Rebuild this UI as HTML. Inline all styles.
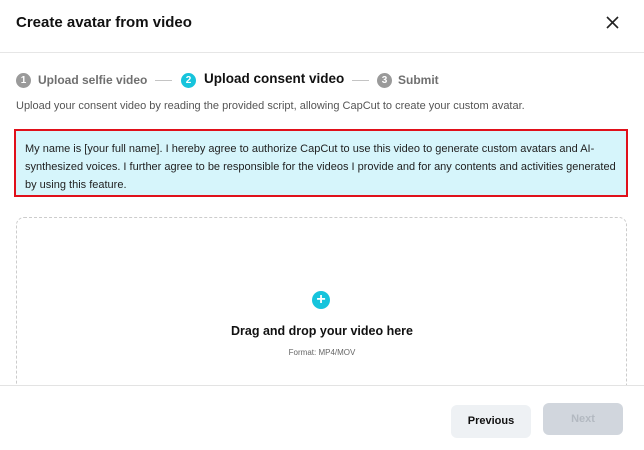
<!DOCTYPE html>
<html><head><style>
*{margin:0;padding:0;box-sizing:border-box}
body{width:644px;height:450px;background:#fff;font-family:"Liberation Sans",sans-serif;position:relative;overflow:hidden;color:#111}
.abs{position:absolute}
.num{position:absolute;width:15px;height:15px;border-radius:50%;background:#9a9a9a;color:#fff;font-size:10px;font-weight:bold;text-align:center;line-height:15px;top:73px}
.st{position:absolute;top:72px;font-size:12px;font-weight:bold;color:#6f6f6f;line-height:16px;white-space:nowrap}
.dash{position:absolute;top:80px;height:1px;width:17px;background:#c4c4c4}
</style></head><body>
<div class="abs" style="left:16px;top:14px;font-size:15px;font-weight:bold">Create avatar from video</div>
<svg class="abs" style="left:606px;top:16px" width="13" height="13" viewBox="0 0 13 13"><path d="M1 1L12 12M12 1L1 12" stroke="#222" stroke-width="1.6"/></svg>
<div class="abs" style="left:0;top:52px;width:644px;height:1px;background:#e6e6e6"></div>
<span class="num" style="left:16px">1</span><span class="st" style="left:38px">Upload selfie video</span>
<div class="dash" style="left:155px"></div>
<span class="num" style="left:181px;background:#16c4dc">2</span><span class="st" style="left:204px;font-size:13.5px;color:#111;top:71px">Upload consent video</span>
<div class="dash" style="left:352px"></div>
<span class="num" style="left:377px">3</span><span class="st" style="left:398px">Submit</span>
<div class="abs" style="left:16px;top:100px;font-size:11px;color:#555">Upload your consent video by reading the provided script, allowing CapCut to create your custom avatar.</div>
<div class="abs" style="left:14px;top:129px;width:614px;height:68px;background:#d6f5fb;border:2px solid #e0101a;padding:9px 9px;font-size:11px;line-height:18px;color:#222">My name is [your full name]. I hereby agree to authorize CapCut to use this video to generate custom avatars and AI-synthesized voices. I further agree to be responsible for the videos I provide and for any contents and activities generated by using this feature.</div>
<div class="abs" style="left:16px;top:217px;width:611px;height:200px;border:1px dashed #ccc;border-radius:8px"></div>
<div class="abs" style="left:312px;top:291px;width:18px;height:18px;border-radius:50%;background:#16c4dc;color:#fff;font-size:16px;font-weight:bold;text-align:center;line-height:18px">+</div>
<div class="abs" style="left:0;width:644px;top:324px;text-align:center;font-size:12.5px;font-weight:bold">Drag and drop your video here</div>
<div class="abs" style="left:0;width:644px;top:348px;text-align:center;font-size:8px;color:#666">Format: MP4/MOV</div>
<div class="abs" style="left:0;top:385px;width:644px;height:65px;background:#fff;border-top:1px solid #e3e3e3"></div>
<div class="abs" style="left:451px;top:405px;width:80px;height:33px;border-radius:6px;background:#eef1f4;font-size:11px;font-weight:bold;text-align:center;line-height:33px">Previous</div>
<div class="abs" style="left:543px;top:403px;width:80px;height:32px;border-radius:6px;background:#d1d6dd;color:#b3b9c1;font-size:11px;font-weight:bold;text-align:center;line-height:32px">Next</div>
</body></html>
